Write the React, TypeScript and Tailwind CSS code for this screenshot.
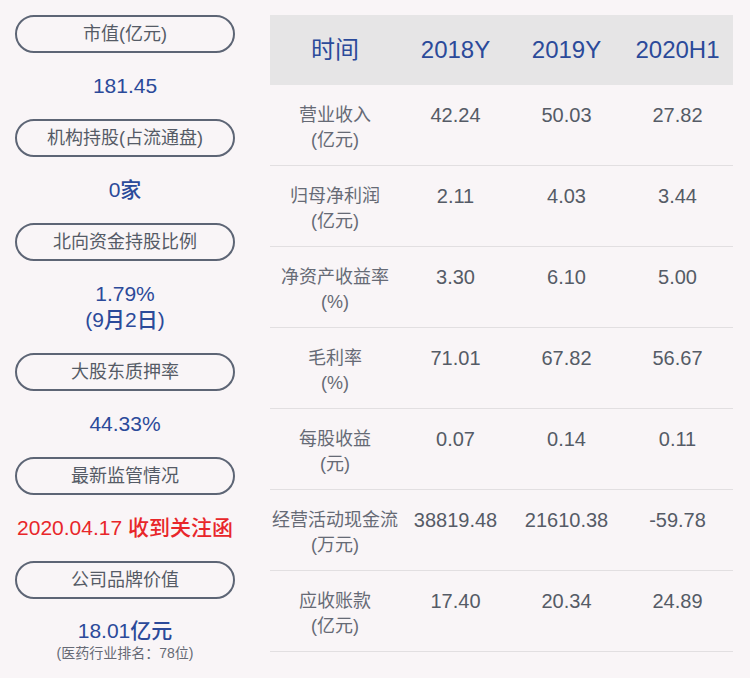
const left: { label: string; value: React.ReactNode }[] = [
  { label: "市值(亿元)", value: <p className="text-[21px] font-medium leading-[24px] text-[#2b4a9a] py-[21px]">181.45</p> },
  { label: "机构持股(占流通盘)", value: <p className="text-[21px] font-medium leading-[24px] text-[#2b4a9a] py-[21px]">0家</p> },
  {
    label: "北向资金持股比例",
    value: (
      <div className="text-[21px] font-medium leading-[26px] text-[#2b4a9a] py-[20px]">
        <p>1.79%</p>
        <p>(9月2日)</p>
      </div>
    ),
  },
  { label: "大股东质押率", value: <p className="text-[21px] font-medium leading-[24px] text-[#2b4a9a] py-[21px]">44.33%</p> },
  { label: "最新监管情况", value: <p className="text-[21px] font-medium leading-[24px] text-[#e8262a] py-[21px]">2020.04.17 收到关注函</p> },
  {
    label: "公司品牌价值",
    value: (
      <div className="pt-[20px]">
        <p className="text-[21px] font-medium leading-[24px] text-[#2b4a9a]">18.01亿元</p>
        <p className="text-[14px] leading-[20px] text-[#666a75]">(医药行业排名：78位)</p>
      </div>
    ),
  },
]

const rows = [
  ["营业收入", "(亿元)", "42.24", "50.03", "27.82"],
  ["归母净利润", "(亿元)", "2.11", "4.03", "3.44"],
  ["净资产收益率", "(%)", "3.30", "6.10", "5.00"],
  ["毛利率", "(%)", "71.01", "67.82", "56.67"],
  ["每股收益", "(元)", "0.07", "0.14", "0.11"],
  ["经营活动现金流", "(万元)", "38819.48", "21610.38", "-59.78"],
  ["应收账款", "(亿元)", "17.40", "20.34", "24.89"],
]

export default function App() {
  return (
    <div
      className="w-[750px] h-[678px] bg-[#f9f5f7] flex gap-[35px] pl-[15px] pt-[15px]"
      style={{ fontFamily: '"Liberation Sans", "Noto Sans CJK SC", sans-serif' }}
    >
      <div className="w-[220px] flex flex-col text-center">
        {left.map((item) => (
          <div key={item.label}>
            <div className="h-[38px] rounded-full border-2 border-[#5d6575] flex items-center justify-center text-[18px] text-[#555b66]">
              {item.label}
            </div>
            {item.value}
          </div>
        ))}
      </div>
      <div className="w-[463px]">
        <div className="grid grid-cols-[130px_111px_111px_111px] h-[70px] bg-[#e6e5e6] items-center text-center text-[24px] text-[#2b4a9a]">
          <span>时间</span>
          <span>2018Y</span>
          <span>2019Y</span>
          <span>2020H1</span>
        </div>
        {rows.map((r) => (
          <div
            key={r[0]}
            className="grid grid-cols-[130px_111px_111px_111px] h-[81px] border-b border-[#e2dfe1] text-center pt-[18px]"
          >
            <div className="text-[18px] leading-[25px] text-[#666a75]">
              <p>{r[0]}</p>
              <p>{r[1]}</p>
            </div>
            <span className="text-[20px] leading-[25px] text-[#555b66]">{r[2]}</span>
            <span className="text-[20px] leading-[25px] text-[#555b66]">{r[3]}</span>
            <span className="text-[20px] leading-[25px] text-[#555b66]">{r[4]}</span>
          </div>
        ))}
      </div>
    </div>
  )
}
